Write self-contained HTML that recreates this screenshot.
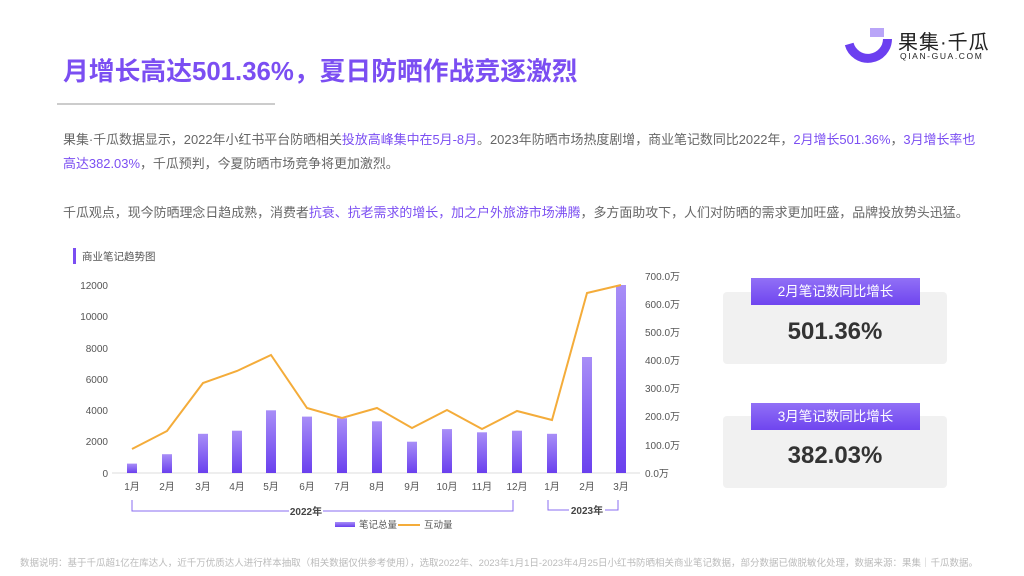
<!DOCTYPE html>
<html><head><meta charset="utf-8"><style>
*{margin:0;padding:0;box-sizing:border-box}
body{width:1024px;height:576px;background:#fff;position:relative;overflow:hidden;font-family:"Liberation Sans","Noto Sans CJK SC",sans-serif;color:#666}
.abs{position:absolute;white-space:nowrap}
.title{left:63px;top:51px;font-size:25.8px;font-weight:bold;color:#7b4ef2;letter-spacing:0}
.hl{color:#7b4ef2}
.p{font-size:12.95px;color:#666}
.card{position:absolute;left:723px;width:224px;height:72px;background:#f1f1f1;border-radius:4px}
.lab{position:absolute;left:751px;width:169px;height:27px;background:linear-gradient(#9170f6,#6f45ef);color:#fff;font-size:13.5px;text-align:center;line-height:27px}
.num{position:absolute;left:723px;width:224px;text-align:center;font-size:24px;font-weight:bold;color:#333}
</style></head><body>
<div class="abs title">月增长高达501.36%，夏日防晒作战竞逐激烈</div>
<div class="abs" style="left:57px;top:103px;width:218px;height:2px;background:#ccc"></div>
<svg class="abs" style="left:0;top:0" width="1024" height="80">
<rect x="870" y="28" width="14" height="9" fill="#b9a5f8"/>
<path d="M849.2 44 A19.5 19.5 0 0 0 887.5 39" fill="none" stroke="#6b3ff0" stroke-width="9"/>
</svg>
<div class="abs" style="left:898px;top:26px;font-size:20px;color:#222;letter-spacing:1px">果集·千瓜</div>
<div class="abs" style="left:900px;top:51px;font-size:8.5px;color:#222;letter-spacing:1.6px">QIAN-GUA.COM</div>
<div class="abs p" style="left:63px;top:129px">果集·千瓜数据显示，2022年小红书平台防晒相关<span class="hl">投放高峰集中在5月-8月</span>。2023年防晒市场热度剧增，商业笔记数同比2022年，<span class="hl">2月增长501.36%</span>，<span class="hl">3月增长率也</span></div>
<div class="abs p" style="left:63px;top:153px"><span class="hl">高达382.03%</span>，千瓜预判，今夏防晒市场竞争将更加激烈。</div>
<div class="abs p" style="left:63px;top:202px">千瓜观点，现今防晒理念日趋成熟，消费者<span class="hl">抗衰、抗老需求的增长，加之户外旅游市场沸腾</span>，多方面助攻下，人们对防晒的需求更加旺盛，品牌投放势头迅猛。</div>

<div class="abs" style="left:73px;top:248px;width:3px;height:16px;background:#7b4ef2"></div>
<div class="abs" style="left:82px;top:249px;font-size:10.5px;color:#555">商业笔记趋势图</div>

<svg class="abs" style="left:0;top:0" width="700" height="540">
<defs><linearGradient id="g" x1="0" y1="0" x2="0" y2="1"><stop offset="0" stop-color="#a88ef7"/><stop offset="1" stop-color="#6a40ee"/></linearGradient></defs>
<g font-size="10" fill="#555" text-anchor="end" font-family="Liberation Sans,sans-serif">
<text x="108" y="289">12000</text><text x="108" y="320">10000</text><text x="108" y="352">8000</text><text x="108" y="383">6000</text><text x="108" y="414">4000</text><text x="108" y="445">2000</text><text x="108" y="477">0</text>
</g>
<g font-size="10" fill="#555" font-family="Liberation Sans,sans-serif">
<text x="645" y="280">700.0万</text><text x="645" y="308">600.0万</text><text x="645" y="336">500.0万</text><text x="645" y="364">400.0万</text><text x="645" y="392">300.0万</text><text x="645" y="420">200.0万</text><text x="645" y="449">100.0万</text><text x="645" y="477">0.0万</text>
</g>
<line x1="112" y1="473" x2="640" y2="473" stroke="#ddd"/>
<g fill="url(#g)">
<rect x="127" y="463.6" width="10" height="9.4"/><rect x="162" y="454.2" width="10" height="18.8"/><rect x="198" y="433.8" width="10" height="39.2"/><rect x="232" y="430.7" width="10" height="42.3"/><rect x="266" y="410.3" width="10" height="62.7"/><rect x="302" y="416.6" width="10" height="56.4"/><rect x="337" y="418.2" width="10" height="54.8"/><rect x="372" y="421.3" width="10" height="51.7"/><rect x="407" y="441.7" width="10" height="31.3"/><rect x="442" y="429.1" width="10" height="43.9"/><rect x="477" y="432.3" width="10" height="40.7"/><rect x="512" y="430.7" width="10" height="42.3"/><rect x="547" y="433.8" width="10" height="39.2"/><rect x="582" y="357" width="10" height="116"/><rect x="616" y="285" width="10" height="188"/>
</g>
<polyline fill="none" stroke="#f4ac3a" stroke-width="2" points="132,449 167,431 203,383 237,371 271,355 307,408 342,418 377,408 412,428 447,410 482,429 517,411 552,420 587,293 621,285"/>
<g font-size="10" fill="#555" text-anchor="middle" font-family="Liberation Sans,Noto Sans CJK SC,sans-serif">
<text x="132" y="490">1月</text><text x="167" y="490">2月</text><text x="203" y="490">3月</text><text x="237" y="490">4月</text><text x="271" y="490">5月</text><text x="307" y="490">6月</text><text x="342" y="490">7月</text><text x="377" y="490">8月</text><text x="412" y="490">9月</text><text x="447" y="490">10月</text><text x="482" y="490">11月</text><text x="517" y="490">12月</text><text x="552" y="490">1月</text><text x="587" y="490">2月</text><text x="621" y="490">3月</text>
</g>
<path d="M132 500 V511 H289 M323 511 H513 V500" fill="none" stroke="#8a6cf0" stroke-width="1"/>
<path d="M548 500 V510 H569 M605 510 H618 V500" fill="none" stroke="#8a6cf0" stroke-width="1"/>
<g font-size="10" fill="#444" font-weight="bold" text-anchor="middle" font-family="Liberation Sans,Noto Sans CJK SC,sans-serif">
<text x="306" y="515">2022年</text><text x="587" y="514">2023年</text></g>
<rect x="335" y="522" width="20" height="5" fill="url(#g)"/>
<text x="359" y="528" font-size="9.5" fill="#555" font-family="Liberation Sans,Noto Sans CJK SC,sans-serif">笔记总量</text>
<line x1="398" y1="525" x2="420" y2="525" stroke="#f4ac3a" stroke-width="2"/>
<text x="424" y="528" font-size="9.5" fill="#555" font-family="Liberation Sans,Noto Sans CJK SC,sans-serif">互动量</text>
</svg>

<div class="card" style="top:292px"></div>
<div class="lab" style="top:278px">2月笔记数同比增长</div>
<div class="num" style="top:318px">501.36%</div>
<div class="card" style="top:416px"></div>
<div class="lab" style="top:403px">3月笔记数同比增长</div>
<div class="num" style="top:442px">382.03%</div>

<div class="abs" style="left:20px;top:555px;font-size:9.5px;color:#bbb">数据说明：基于千瓜超1亿在库达人，近千万优质达人进行样本抽取（相关数据仅供参考使用），选取2022年、2023年1月1日-2023年4月25日小红书防晒相关商业笔记数据，部分数据已做脱敏化处理，数据来源：果集｜千瓜数据。</div>
</body></html>
